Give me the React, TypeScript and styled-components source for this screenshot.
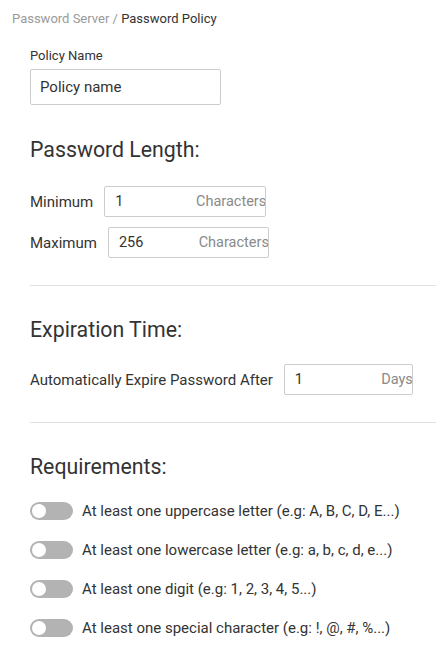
import styled, { createGlobalStyle } from 'styled-components';

const colors = {
	text: '#333333',
	muted: '#9a9a9a',
	suffix: '#8a8a8a',
	border: '#cccccc',
	divider: '#e2e2e2',
	track: '#b3b3b3',
	white: '#ffffff',
};

const GlobalStyle = createGlobalStyle`
	body {
		margin: 0;
		background: ${colors.white};
		font-family: Roboto, 'Liberation Sans', Arial, sans-serif;
		color: ${colors.text};
	}
`;

const Page = styled.div`
	width: 436px;
	overflow: hidden;
`;

const Breadcrumb = styled.nav`
	padding: 11px 12px 0;
	font-size: 13px;
	line-height: 16px;
	color: ${colors.text};
`;

const Crumb = styled.span`
	color: ${colors.muted};
`;

const Form = styled.form`
	display: flex;
	flex-direction: column;
	align-items: flex-start;
	padding-left: 30px;
`;

const FieldLabel = styled.label`
	margin-top: 21px;
	font-size: 13px;
	line-height: 16px;
	color: ${colors.text};
`;

const NameInput = styled.input`
	box-sizing: border-box;
	width: 191px;
	height: 36px;
	margin-top: 5px;
	padding: 0 9px;
	border: 1px solid ${colors.border};
	border-radius: 2px;
	font-family: inherit;
	font-size: 15px;
	color: ${colors.text};
	outline: none;
`;

const Heading = styled.h3<{ $space: number }>`
	margin: ${(p) => p.$space}px 0 0;
	font-size: 21.3px;
	line-height: 24px;
	font-weight: 400;
	color: ${colors.text};
`;

const Rows = styled.div<{ $space: number }>`
	display: flex;
	flex-direction: column;
	gap: 10px;
	margin-top: ${(p) => p.$space}px;
`;

const Row = styled.div`
	display: flex;
	align-items: center;
	gap: 11px;
`;

const RowLabel = styled.span`
	font-size: 15px;
	line-height: 18px;
	color: ${colors.text};
`;

const UnitBox = styled.div<{ $width: number }>`
	box-sizing: border-box;
	display: flex;
	align-items: center;
	width: ${(p) => p.$width}px;
	height: 31px;
	padding-left: 10px;
	border: 1px solid ${colors.border};
	border-radius: 2px;
	overflow: hidden;
`;

const UnitValue = styled.input`
	flex: 1;
	min-width: 0;
	border: none;
	padding: 0;
	font-family: inherit;
	font-size: 14.5px;
	color: ${colors.text};
	background: transparent;
	outline: none;
`;

const UnitSuffix = styled.span`
	margin-right: -1px;
	font-size: 14.5px;
	color: ${colors.suffix};
	white-space: nowrap;
`;

const Divider = styled.hr`
	align-self: stretch;
	margin: 27px 0 0;
	border: none;
	border-top: 1px solid ${colors.divider};
`;

const ToggleList = styled.div`
	display: flex;
	flex-direction: column;
	gap: 21px;
	margin-top: 23px;
`;

const ToggleRow = styled.label`
	display: flex;
	align-items: center;
	gap: 9px;
	font-size: 15px;
	line-height: 18px;
	color: ${colors.text};
`;

const Track = styled.span<{ $on?: boolean }>`
	position: relative;
	flex: none;
	width: 43px;
	height: 18px;
	border-radius: 9px;
	background: ${(p) => (p.$on ? '#4caf50' : colors.track)};
`;

const Knob = styled.span<{ $on?: boolean }>`
	position: absolute;
	top: 2px;
	left: ${(p) => (p.$on ? '27px' : '2px')};
	width: 14px;
	height: 14px;
	border-radius: 50%;
	background: ${colors.white};
`;

const requirements = [
	'At least one uppercase letter (e.g: A, B, C, D, E...)',
	'At least one lowercase letter (e.g: a, b, c, d, e...)',
	'At least one digit (e.g: 1, 2, 3, 4, 5...)',
	'At least one special character (e.g: !, @, #, %...)',
];

const UnitField = ({ value, unit, width }: { value: string; unit: string; width: number }) => (
	<UnitBox $width={width}>
		<UnitValue defaultValue={value} />
		<UnitSuffix>{unit}</UnitSuffix>
	</UnitBox>
);

const App = () => {
	return (
		<Page>
			<GlobalStyle />
			<Breadcrumb>
				<Crumb>Password Server</Crumb> <Crumb>/</Crumb> Password Policy
			</Breadcrumb>
			<Form>
				<FieldLabel>Policy Name</FieldLabel>
				<NameInput defaultValue='Policy name' />

				<Heading $space={33}>Password Length:</Heading>
				<Rows $space={24}>
					<Row>
						<RowLabel>Minimum</RowLabel>
						<UnitField value='1' unit='Characters' width={162} />
					</Row>
					<Row>
						<RowLabel>Maximum</RowLabel>
						<UnitField value='256' unit='Characters' width={161} />
					</Row>
				</Rows>
				<Divider />

				<Heading $space={32}>Expiration Time:</Heading>
				<Rows $space={22}>
					<Row>
						<RowLabel>Automatically Expire Password After</RowLabel>
						<UnitField value='1' unit='Days' width={129} />
					</Row>
				</Rows>
				<Divider />

				<Heading $space={32}>Requirements:</Heading>
				<ToggleList>
					{requirements.map((r) => (
						<ToggleRow key={r}>
							<Track>
								<Knob />
							</Track>
							{r}
						</ToggleRow>
					))}
				</ToggleList>
			</Form>
		</Page>
	);
};

export default App;
